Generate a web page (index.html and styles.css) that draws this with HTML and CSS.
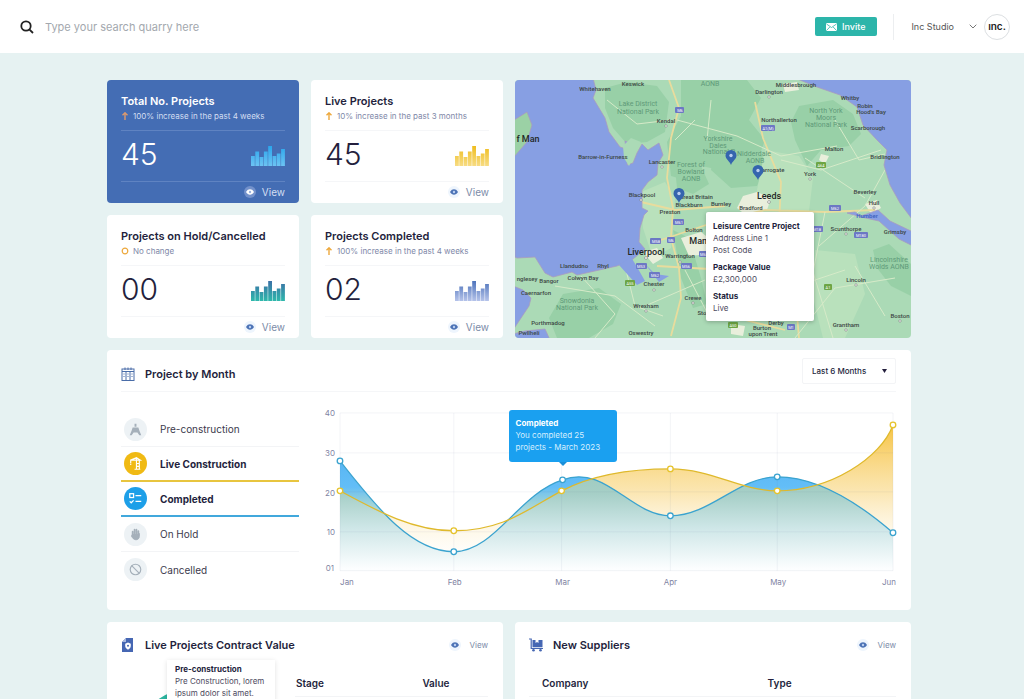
FILE: index.html
```
<!DOCTYPE html>
<html lang="en">
<head>
  <meta charset="UTF-8">
  <meta name="viewport" content="width=device-width, initial-scale=1">
  <title>Projects Dashboard</title>
  <link rel="stylesheet" href="styles.css">
</head>
<body>
  <!-- shared icons -->
  <svg class="sprite" aria-hidden="true">
    <defs>
      <linearGradient id="g-blue" x1="0" y1="0" x2="0" y2="1"><stop offset="0" stop-color="#2ba6ec"/><stop offset="1" stop-color="#6cc3f3"/></linearGradient>
      <linearGradient id="g-yellow" x1="0" y1="0" x2="0" y2="1"><stop offset="0" stop-color="#efbd1e"/><stop offset="1" stop-color="#f7dc84"/></linearGradient>
      <linearGradient id="g-teal" x1="0" y1="0" x2="0" y2="1"><stop offset="0" stop-color="#3b70a6"/><stop offset="1" stop-color="#2fb8ac"/></linearGradient>
      <linearGradient id="g-indigo" x1="0" y1="0" x2="0" y2="1"><stop offset="0" stop-color="#4f74bb"/><stop offset="1" stop-color="#b5c3ea"/></linearGradient>
      <symbol id="bars" viewBox="0 0 34 20">
        <path d="M0 10h3.800v10H0zM4.300 5.500h3.800V20H4.300zM8.600 11h3.800v9H8.600zM12.900 5.500h3.800V20h-3.800zM17.200 0h3.800v20h-3.800zM21.500 10h3.800v10h-3.800zM25.800 7.500h3.800V20h-3.800zM30.100 3h3.800v17h-3.800z"/>
      </symbol>
      <symbol id="eye" viewBox="0 0 12 12">
        <circle class="eye-bg" cx="6" cy="6" r="6"/>
        <path class="eye-shape" d="M2 6c1.200-2 2.500-2.700 4-2.700S8.800 4 10 6c-1.200 2-2.500 2.700-4 2.700S3.200 8 2 6z"/>
        <circle class="eye-dot" cx="6" cy="6" r="1.200"/>
      </symbol>
      <symbol id="arrow-up" viewBox="0 0 8 8">
        <path d="M4 8V1M1.500 3.300L4 .8l2.500 2.500" fill="none" stroke="currentColor" stroke-width="1.400"/>
      </symbol>
      <symbol id="pin" viewBox="0 0 12 15">
        <path d="M6 0a5.500 5.500 0 0 1 5.500 5.500C11.500 9 7.500 11 6 15 4.500 11 .5 9 .5 5.500A5.500 5.500 0 0 1 6 0z" fill="#3565ae"/>
        <circle cx="6" cy="5.500" r="1.700" fill="#b9cdf0"/>
      </symbol>
    </defs>
  </svg>

  <header class="topbar">
    <form class="search" role="search">
      <label for="search" aria-label="Search">
        <svg width="14" height="14" viewBox="0 0 14 14" fill="none" stroke="#222" stroke-width="1.800"><circle cx="6" cy="6" r="4.700"/><path d="M9.300 9.300L13 13"/></svg>
      </label>
      <input type="search" id="search" placeholder="Type your search quarry here">
    </form>
    <button type="button" class="invite-btn">
      <svg width="11" height="8" viewBox="0 0 11 8"><rect width="11" height="8" rx="1" fill="#fff"/><path d="M.5 1l5 3.500 5-3.500M.5 7.500L3.800 4M10.500 7.500L7.200 4" fill="none" stroke="#2cb5aa" stroke-width=".8"/></svg>
      Invite
    </button>
    <button type="button" class="user-btn">
      Inc Studio
      <svg width="8" height="5" viewBox="0 0 8 5" fill="none" stroke="#777"><path d="M.7.700L4 4 7.300.700"/></svg>
      <span class="avatar">ınc.</span>
    </button>
  </header>

  <main class="dashboard">
    <article class="card stat stat-active">
      <h2>Total No. Projects</h2>
      <p class="trend"><svg><use href="#arrow-up"/></svg>100% increase in the past 4 weeks</p>
      <div class="figure"><strong>45</strong><svg fill="url(#g-blue)"><use href="#bars"/></svg></div>
      <a href="#" class="view"><svg><use href="#eye"/></svg>View</a>
    </article>

    <article class="card stat">
      <h2>Live Projects</h2>
      <p class="trend"><svg><use href="#arrow-up"/></svg>10% increase in the past 3 months</p>
      <div class="figure"><strong>45</strong><svg fill="url(#g-yellow)"><use href="#bars"/></svg></div>
      <a href="#" class="view"><svg><use href="#eye"/></svg>View</a>
    </article>

    <section class="map">
      <svg viewBox="0 0 396 258" preserveAspectRatio="xMidYMid slice">
        <rect width="396" height="258" fill="#abdab6"/>
        <!-- parks and uplands -->
        <g fill="#98d0a7">
          <path d="M90 8l22-6 30 4 12 16-4 30-18 10-20 2-14-16-8-20z"/>
          <path d="M166 0h66l14 18-12 22 16 20-8 22-26 10-30-6-16 14-14-4-4-34 14-26z"/>
          <path d="M200 62l40 2 12 20-10 22-26 2-20-18z"/>
          <path d="M284 26l34-6 20 14 8 20-12 12-28 4-14 16-12-26-4-18z"/>
          <path d="M48 214l36-6 22 16-8 20-24 14H42l-8-20z"/>
          <path d="M160 88l26-2 8 18-16 10-16-6z"/>
          <path d="M358 170l16-6 22 20v32l-20-10-14-18z"/>
          <path d="M158 150l16 8 12 40 6 26-14 4-12-30z"/>
        </g>
        <g fill="#b9e1bc">
          <path d="M250 70l34 6 14 22-6 50-30 34-10-40-12-22z"/>
          <path d="M126 112l24-10 10 16-4 50-18 10-10-30z"/>
          <path d="M300 170l40 4 10 40-20 44h-22l-10-40z"/>
        </g>
        <!-- built-up areas -->
        <g fill="#e9efdc">
          <path d="M228 116l14-4 14 6-4 12-20 6-10-8z"/>
          <path d="M128 172l14-4 6 10-10 6zM166 158l20-6 10 8-2 14-20 2zM350 124l12-4 4 8-10 6zM306 74l8 2-4 8-6-4zM216 244l14 2-2 10-12-2zM268 4l14-2 2 8-14 2z"/>
        </g>
        <!-- roads -->
        <g fill="none" stroke="#e8dc9d" stroke-width="1.800">
          <path d="M154 0l10 28-8 30-4 40 6 30-2 30 8 30 2 30-10 38"/>
          <path d="M240 22l8 36 18 44-2 44 14 40 6 72M146 160l54-18 50-12 60 2 50-2"/>
          <path d="M126 122l34 8 50-4M142 186l70 4 80 4M200 220l30 20 40 10"/>
        </g>
        <g fill="none" stroke="#d6eac8" stroke-width="1">
          <path d="M92 20l30 24 34-4M162 40l60 16 44 20 56-10M266 80l40 10 60-20M290 78l60 40M310 132l-12 60 20 66M340 186l30 50M40 206l60 10 40 30M66 196l34 38-20 24M110 186l10 40 28 10M330 190l-60 20M280 258l40-50 60-10M170 190l26 50"/>
          <path d="M160 60l20-20M196 20l-4 40M320 40l24 40 26-6M130 226l60-26M370 90l-20 36-46 40"/>
        </g>
        <!-- sea -->
        <g fill="#879fe3" stroke="#a99abf" stroke-width=".8">
          <path d="M-2-2H78l3 12-3 8 12 20 4 14 11 15 6 2-1-8 4 2v8l-2 14 6-2 4-10 5-9 6 6 11-7 4 12-5 8-1 12-9 7-6 8v18l6 3-4 4-4 13-1 14 6 7-12 10-16 7-40 9-5-3-19 5-8-4-5-8-5-8-18 1-2-1z"/>
          <path d="M-2 206l10 4 8 8-2 8-16 24zM-2 254l12-3 20-2 5 11H-2z"/>
          <path d="M280-2l22 9 23 8 17 12 6 18 14 15 10 10-3 15 6 20 10 18 15 20V-2z"/>
          <path d="M332 133l8-1 6 4 17-6 12 11 25 12v14l-16-8-20-18-18-4z"/>
        </g>
        <path d="M-1 40l13-8 5 13-5 17-13 15z" fill="#9bd1a5" stroke="#a99abf" stroke-width=".8"/>
        <path d="M104 185l12-8 6 10 8 14-8 4zM130 184l10 10 14 2-10 6z" fill="#879fe3"/>
        <!-- Barrow peninsula -->
        <path d="M108 66l8-8 10 4-6 12-6 12-5-8z" fill="#abdab6"/>

        <g class="parks">
          <text x="123" y="26">Lake District</text><text x="123" y="34">National Park</text>
          <text x="195" y="6">AONB</text>
          <text x="203" y="61">Yorkshire</text><text x="203" y="68">Dales</text><text x="204" y="74">National P</text>
          <text x="239" y="76">Nidderdale</text><text x="240" y="83">AONB</text>
          <text x="176" y="87">Forest of</text><text x="176" y="94">Bowland</text><text x="176" y="101">AONB</text>
          <text x="311" y="33">North York</text><text x="311" y="40">Moors</text><text x="311" y="47">National Park</text>
          <text x="62" y="223">Snowdonia</text><text x="62" y="230">National Park</text>
          <text x="374" y="182">Lincolnshire</text><text x="374" y="189">Wolds AONB</text>
        </g>
        <g class="places">
          <text x="80" y="11">Whitehaven</text><text x="118" y="6">Keswick</text><text x="151" y="43">Kendal</text>
          <text x="88" y="79">Barrow-in-Furness</text><text x="147" y="84">Lancaster</text>
          <text x="127" y="117">Blackpool</text><text x="181" y="119">Great Britain</text><text x="174" y="127">Blackburn</text>
          <text x="155" y="134">Preston</text><text x="179" y="152">Bolton</text><text x="165" y="178">Warrington</text>
          <text x="59" y="188">Llandudno</text><text x="88" y="188">Rhyl</text><text x="68" y="200">Colwyn Bay</text>
          <text x="12" y="201">nglesey</text><text x="34" y="203">Bangor</text><text x="21" y="215">Caernarfon</text>
          <text x="139" y="206">Chester</text><text x="131" y="228">Wrexham</text><text x="178" y="220">Crewe</text>
          <text x="33" y="245">Porthmadog</text><text x="14" y="255">Pwllheli</text><text x="126" y="255">Oswestry</text>
          <text x="281" y="7">Middlesbrough</text><text x="254" y="14">Darlington</text><text x="264" y="42">Northallerton</text>
          <text x="335" y="20">Whitby</text><text x="350" y="28">Robin</text><text x="356" y="34">Hood's Bay</text>
          <text x="353" y="50">Scarborough</text><text x="319" y="71">Malton</text><text x="370" y="79">Bridlington</text>
          <text x="256" y="92">Harrogate</text><text x="295" y="96">York</text><text x="350" y="114">Beverley</text>
          <text x="359" y="125">Hull</text><text x="206" y="126">Burnley</text><text x="236" y="130">Bradford</text>
          <text x="331" y="151">Scunthorpe</text><text x="380" y="154">Grimsby</text><text x="341" y="202">Lincoln</text>
          <text x="385" y="238">Boston</text><text x="331" y="247">Grantham</text><text x="261" y="245">Derby</text>
          <text x="247" y="250">Burton</text><text x="248" y="256">upon Trent</text><text x="190" y="235">Stoke</text>
          <text x="352" y="138" fill="#3d5fc0">Humber</text>
        </g>
        <g class="cities">
          <text x="13" y="62">f Man</text><text x="131" y="175">Liverpool</text>
          <text x="254" y="119">Leeds</text><text x="188" y="164">Manch</text>
        </g>
        <g fill="#fff" stroke="#777" stroke-width=".6">
          <circle cx="151" cy="46" r="1.200"/><circle cx="147" cy="87" r="1.200"/><circle cx="131" cy="178" r="1.400"/><circle cx="165" cy="182" r="1.200"/>
          <circle cx="139" cy="210" r="1.200"/><circle cx="131" cy="231" r="1.200"/><circle cx="178" cy="223" r="1.200"/><circle cx="254" cy="122" r="1.400"/>
          <circle cx="295" cy="99" r="1.200"/><circle cx="359" cy="128" r="1.200"/><circle cx="254" cy="17" r="1.200"/><circle cx="341" cy="205" r="1.200"/>
          <circle cx="385" cy="241" r="1.200"/><circle cx="331" cy="250" r="1.200"/><circle cx="331" cy="154" r="1.200"/><circle cx="126" cy="120" r="1.200"/>
        </g>
        <g class="roads">
          <rect x="160" y="27" width="9" height="6"/><text x="165" y="32">M6</text>
          <rect x="158" y="139" width="11" height="6"/><text x="164" y="144">M61</text>
          <rect x="135" y="158" width="11" height="6"/><text x="141" y="163">M58</text>
          <rect x="152" y="157" width="8" height="6"/><text x="156" y="162">M6</text>
          <rect x="121" y="183" width="11" height="6"/><text x="126" y="188">M53</text>
          <rect x="134" y="192" width="11" height="6"/><text x="140" y="197">M62</text>
          <rect x="166" y="183" width="11" height="6"/><text x="171" y="188">M56</text>
          <rect x="184" y="171" width="9" height="6"/><text x="189" y="176">M60</text>
          <rect x="246" y="45" width="14" height="6"/><text x="253" y="50">A1(M)</text>
          <rect x="314" y="125" width="12" height="6"/><text x="320" y="130">M62</text>
          <rect x="296" y="146" width="12" height="6"/><text x="302" y="151">M18</text>
          <rect x="339" y="152" width="14" height="6"/><text x="346" y="157">M180</text>
          <rect x="272" y="244" width="8" height="6"/><text x="276" y="249">M1</text>
        </g>
        <g class="roads a-roads">
          <rect x="110" y="200" width="10" height="6"/><text x="115" y="205">A55</text>
          <rect x="301" y="82" width="10" height="6"/><text x="306" y="87">A64</text>
          <rect x="309" y="204" width="8" height="6"/><text x="313" y="209">A1</text>
          <rect x="213" y="242" width="10" height="6"/><text x="218" y="247">A50</text>
        </g>
        <use href="#pin" x="210" y="70" width="12" height="15"/>
        <use href="#pin" x="237" y="85" width="12" height="15"/>
        <use href="#pin" x="158" y="108" width="12" height="15"/>
      </svg>
      <dl class="map-popup">
        <dt>Leisure Centre Project</dt>
        <dd>Address Line 1<br>Post Code</dd>
        <dt>Package Value</dt>
        <dd>£2,300,000</dd>
        <dt>Status</dt>
        <dd>Live</dd>
      </dl>
    </section>

    <article class="card stat">
      <h2>Projects on Hold/Cancelled</h2>
      <p class="trend"><svg viewBox="0 0 8 8"><circle cx="4" cy="4" r="2.800" fill="none" stroke="currentColor" stroke-width="1.200"/></svg>No change</p>
      <div class="figure"><strong>00</strong><svg fill="url(#g-teal)"><use href="#bars"/></svg></div>
      <a href="#" class="view"><svg><use href="#eye"/></svg>View</a>
    </article>

    <article class="card stat">
      <h2>Projects Completed</h2>
      <p class="trend"><svg><use href="#arrow-up"/></svg>100% increase in the past 4 weeks</p>
      <div class="figure"><strong>02</strong><svg fill="url(#g-indigo)"><use href="#bars"/></svg></div>
      <a href="#" class="view"><svg><use href="#eye"/></svg>View</a>
    </article>

    <section class="card panel months">
      <div class="panel-head">
        <svg width="14" height="14" viewBox="0 0 14 14" fill="none" stroke="#4a6da8"><rect x="1" y="2" width="12" height="11.500"/><path d="M1 4.500h12M4 .5v2.500M7 .5v2.500M10 .5v2.500M5 4.500v9M9 4.500v9M2.500 7h1M6.500 7h1M10.500 7h1M2.500 9.500h1M6.500 9.500h1M10.500 9.500h1"/></svg>
        <h2>Project by Month</h2>
        <select aria-label="Period">
          <option>Last 6 Months</option>
        </select>
      </div>

      <div class="months-body">
        <div class="stages">
          <button type="button">
            <span class="stage-icon"><svg viewBox="0 0 24 24"><path d="M11 6h2v3h-2zM9 10h6l1 3H8zM8 13l-2 5h2l2-3h4l2 3h2l-2-5z" fill="#a5b0ba"/></svg></span>
            Pre-construction
          </button>
          <button type="button" class="is-live">
            <span class="stage-icon"><svg viewBox="0 0 24 24" fill="none" stroke="#fff" stroke-width="1.200"><path d="M7 8.500l6-2.500 4 2.500H7v3M13 6v12M16 9v9M13 12h3M13 15h3M11 18h6M7 12v1.500"/></svg></span>
            Live Construction
          </button>
          <button type="button" class="is-completed">
            <span class="stage-icon"><svg viewBox="0 0 24 24" fill="none" stroke="#fff" stroke-width="1.300"><rect x="6" y="7" width="4" height="4"/><path d="M12 9h6M12 15h6M6 15l1.500 1.500L10 14"/></svg></span>
            Completed
          </button>
          <button type="button">
            <span class="stage-icon"><svg viewBox="0 0 24 24" fill="none" stroke="#a5b0ba" stroke-width="1.800" stroke-linecap="round"><path d="M9 13V9M11 12V7M13 12V7M15 12V8.500"/><path d="M9 12h6l1-1v3c0 2-1.500 3.500-3.500 3.500S9 16 8 14z" fill="#a5b0ba" stroke-width="1"/></svg></span>
            On Hold
          </button>
          <button type="button">
            <span class="stage-icon"><svg viewBox="0 0 24 24" fill="none" stroke="#a5b0ba" stroke-width="1.200"><circle cx="12" cy="12" r="5.500"/><path d="M8 8l8 8"/></svg></span>
            Cancelled
          </button>
        </div>

        <div class="chart">
          <svg viewBox="0 0 576 190">
            <defs>
              <linearGradient id="fill-blue" gradientUnits="userSpaceOnUse" x1="0" y1="58" x2="0" y2="164"><stop offset="0" stop-color="#2fa4f0" stop-opacity=".8"/><stop offset=".25" stop-color="#2fa8f5" stop-opacity=".75"/><stop offset=".4" stop-color="#5bb4c0" stop-opacity=".6"/><stop offset="1" stop-color="#bfe9ea" stop-opacity=".05"/></linearGradient>
              <linearGradient id="fill-yellow" gradientUnits="userSpaceOnUse" x1="0" y1="22" x2="0" y2="160"><stop offset="0" stop-color="#f5b921" stop-opacity=".85"/><stop offset=".5" stop-color="#f7cf6a" stop-opacity=".5"/><stop offset="1" stop-color="#fdf0cc" stop-opacity="0"/></linearGradient>
              <linearGradient id="fill-both" gradientUnits="userSpaceOnUse" x1="0" y1="66" x2="0" y2="166"><stop offset="0" stop-color="#9ecabd"/><stop offset=".25" stop-color="#a6cfc7"/><stop offset=".6" stop-color="#cfe7e8"/><stop offset="1" stop-color="#fcfeff"/></linearGradient>
              <clipPath id="under-yellow"><path d="M19 88C56 108 92 128 133 128C182 128 206 107 241 88C272 72 308 66 350 66S420 88 457 88C510 88 561 55 573 22V168H19z"/></clipPath>
            </defs>
            <path fill="url(#fill-yellow)" d="M19 88C56 108 92 128 133 128C182 128 206 107 241 88C272 72 308 66 350 66S420 88 457 88C510 88 561 55 573 22V168H19z"/>
            <path fill="url(#fill-blue)" d="M19 58C58 108 92 149 133 149S198 91 242 77C285 61 310 113 350 113S418 74 457 74C500 74 543 104 573 130V168H19z"/>
            <!-- overlap of the two areas -->
            <path clip-path="url(#under-yellow)" fill="url(#fill-both)" d="M19 58C58 108 92 149 133 149S198 91 242 77C285 61 310 113 350 113S418 74 457 74C500 74 543 104 573 130V168H19z"/>
            <path class="grid-lines" d="M19 10h554M19 50h554M19 89h554M19 129h554M19 168h554M19 10v158M133 10v158M241 10v158M350 10v158M457 10v158M573 10v158"/>
            <g fill="none" stroke-width="1.300">
              <path stroke="#3ba3cf" d="M19 58C58 108 92 149 133 149S198 91 242 77C285 61 310 113 350 113S418 74 457 74C500 74 543 104 573 130"/>
              <path stroke="#dfb92c" d="M19 88C56 108 92 128 133 128C182 128 206 107 241 88C272 72 308 66 350 66S420 88 457 88C510 88 561 55 573 22"/>
            </g>
            <g fill="#fff" stroke="#3ba3cf" stroke-width="1.300">
              <circle cx="19" cy="58" r="2.800"/><circle cx="133" cy="149" r="2.800"/><circle cx="242" cy="77" r="2.800"/><circle cx="350" cy="113" r="2.800"/><circle cx="457" cy="74" r="2.800"/><circle cx="573" cy="130" r="2.800"/>
            </g>
            <g fill="#fff" stroke="#e6c32c" stroke-width="1.300">
              <circle cx="19" cy="88" r="2.800"/><circle cx="133" cy="128" r="2.800"/><circle cx="241" cy="88" r="2.800"/><circle cx="350" cy="66" r="2.800"/><circle cx="457" cy="88" r="2.800"/><circle cx="573" cy="22" r="2.800"/>
            </g>
            <g class="axis-y"><text x="14" y="13">40</text><text x="14" y="53">30</text><text x="14" y="93">20</text><text x="14" y="132">10</text><text x="13" y="168">01</text></g>
            <g class="axis-x"><text x="26" y="182">Jan</text><text x="134" y="182">Feb</text><text x="242" y="182">Mar</text><text x="350" y="182">Apr</text><text x="458" y="182">May</text><text x="569" y="182">Jun</text></g>
          </svg>
          <div class="chart-tip" role="tooltip">
            <strong>Completed</strong>
            You completed 25 projects - March 2023
          </div>
        </div>
      </div>
    </section>

    <section class="card panel half">
      <div class="panel-head">
        <svg width="14" height="14" viewBox="0 0 14 14"><path d="M5 0h7v14H1V4z" fill="#4667b3"/><path d="M5 0v4H1z" fill="#a9b9df"/><path d="M7 4.500l2.800 1.200v2.300c0 1.800-1.500 3-2.800 3.800-1.300-.8-2.800-2-2.800-3.800V5.700z" fill="#fff"/><circle cx="7" cy="7.800" r="1" fill="#4667b3"/></svg>
        <h2>Live Projects Contract Value</h2>
        <a href="#" class="view"><svg><use href="#eye"/></svg>View</a>
      </div>
      <div class="contract">
        <div class="donut">
          <svg viewBox="0 0 168 168"><circle cx="84" cy="84" r="68" fill="none" stroke="#2cb5a0" stroke-width="32"/></svg>
          <div class="donut-tip">
            <strong>Pre-construction</strong>
            Pre Construction, lorem ipsum dolor sit amet.
          </div>
        </div>
        <table>
          <thead><tr><th>Stage</th><th>Value</th></tr></thead>
        </table>
      </div>
    </section>

    <section class="card panel half">
      <div class="panel-head">
        <svg width="14" height="14" viewBox="0 0 14 14"><path d="M0 1h2.200v9.500H14" fill="none" stroke="#4667b3" stroke-width="1.200"/><path d="M3.500 2h3v3l1.500-1 1.500 1V2H13.500v7.200h-10z" fill="#4667b3"/><circle cx="4.500" cy="12.200" r="1.300" fill="#4667b3"/><circle cx="11.500" cy="12.200" r="1.300" fill="#4667b3"/></svg>
        <h2>New Suppliers</h2>
        <a href="#" class="view"><svg><use href="#eye"/></svg>View</a>
      </div>
      <table class="suppliers">
        <thead><tr><th>Company</th><th>Type</th></tr></thead>
      </table>
    </section>
  </main>
</body>
</html>
```
FILE: styles.css
```
* {
  box-sizing: border-box;
}

body {
  margin: 0;
  background: #e6f2f2;
  font-family: Inter, "Open Sans", sans-serif;
  color: #241f3d;
}

h2, p, dl, dd {
  margin: 0;
}

button, input, select {
  font-family: inherit;
}

a {
  text-decoration: none;
}

.sprite {
  display: block;
  width: 0;
  height: 0;
}

/* top bar */
.topbar {
  display: flex;
  align-items: center;
  height: 53px;
  padding: 0 14px 0 20px;
  background: #fff;
}

.search {
  display: flex;
  align-items: center;
  flex: 1;
  gap: 11px;
}

.search label {
  display: flex;
}

.search input {
  flex: 1;
  padding: 0;
  border: 0;
  outline: 0;
  background: none;
  font-size: 11px;
}

.search input::placeholder {
  color: #a3a8ae;
}

.invite-btn {
  display: flex;
  align-items: center;
  gap: 5px;
  height: 19px;
  padding: 0 12px 0 11px;
  border: 0;
  border-radius: 2px;
  background: #2cb5aa;
  color: #fff;
  font-size: 9px;
  font-weight: 500;
}

.user-btn {
  display: flex;
  align-items: center;
  gap: 7px;
  height: 26px;
  margin-left: 16px;
  padding: 0 0 0 17px;
  border: 0;
  border-left: 1px solid #eceef0;
  background: none;
  color: #555;
  font-size: 9px;
}

.user-btn svg {
  margin-left: 8px;
}

.avatar {
  width: 26px;
  height: 26px;
  border: 1px solid #dcdfe2;
  border-radius: 50%;
  color: #222;
  font-size: 10px;
  font-weight: 600;
  line-height: 23px;
  text-align: center;
}

/* layout */
.dashboard {
  display: grid;
  grid-template-columns: repeat(4, 1fr);
  gap: 12px;
  padding: 27px 113px 0 107px;
}

.card {
  border-radius: 4px;
  background: #fff;
}

.card h2 {
  font-size: 11px;
  font-weight: 600;
  line-height: 16px;
  white-space: nowrap;
}

/* stat cards */
.stat {
  padding: 13px 14px 1px;
}

.trend {
  display: flex;
  align-items: center;
  gap: 4px;
  padding-bottom: 7px;
  color: #8088a8;
  font-size: 8px;
  line-height: 14px;
  white-space: nowrap;
}

.trend svg {
  width: 8px;
  height: 8px;
  color: #eda83c;
}

.figure {
  display: flex;
  align-items: center;
  justify-content: space-between;
  height: 52px;
  border-top: 1px solid #f5f6f8;
  border-bottom: 1px solid #f5f6f8;
}

.figure strong {
  padding-bottom: 4px;
  font-size: 30px;
  font-weight: 300;
}

.figure svg {
  width: 34px;
  height: 20px;
}

.view {
  display: flex;
  align-items: center;
  justify-content: flex-end;
  gap: 6px;
  color: #7c8ca8;
  font-size: 10px;
  line-height: 20px;
}

.view svg {
  width: 12px;
  height: 12px;
}

.eye-bg {
  fill: var(--eye-bg, #eef5fd);
}

.eye-shape {
  fill: var(--eye, #4b72b5);
}

.eye-dot {
  fill: var(--eye-dot, #b9cdf0);
}

.stat-active {
  --eye-bg: #7391cb;
  --eye: #fff;
  --eye-dot: #9db4df;
  background: #446db4;
  color: #fff;
}

.stat-active .trend,
.stat-active .view {
  color: #d3def2;
}

.stat-active .trend svg {
  color: #dd9a6d;
}

.stat-active .figure {
  border-color: #5f83c2;
}

/* map */
.map {
  position: relative;
  grid-column: span 2;
  grid-row: span 2;
  border-radius: 4px;
  overflow: hidden;
}

.map > svg {
  display: block;
  width: 100%;
  height: 100%;
  font-family: Roboto, sans-serif;
  text-anchor: middle;
}

.places {
  fill: #3b4643;
  font-size: 6px;
  font-weight: 500;
}

.parks {
  fill: #5f9a79;
  font-size: 7px;
}

.cities {
  fill: #1f2826;
  font-size: 9px;
  font-weight: 500;
}

.roads rect {
  fill: #6c78c4;
  rx: 1px;
}

.roads text {
  fill: #fff;
  font-size: 4px;
}

.a-roads rect {
  fill: #6da544;
}

.map-popup {
  position: absolute;
  top: 132px;
  left: 191px;
  width: 108px;
  padding: 8px 7px 7px;
  border-radius: 2px;
  background: #fff;
  box-shadow: 0 1px 4px rgba(0, 0, 0, 0.25);
  font-size: 8px;
  line-height: 12px;
  white-space: nowrap;
}

.map-popup dt {
  font-weight: 700;
}

.map-popup dd {
  color: #4d4a5e;
}

.map-popup dd + dt {
  margin-top: 5px;
}

/* panels */
.panel {
  padding: 8px 15px 0 14px;
}

.panel-head {
  display: flex;
  align-items: center;
  gap: 10px;
}

.panel-head h2 {
  flex: 1;
}

.panel-head .view {
  gap: 8px;
  font-size: 8px;
}

.months {
  grid-column: 1 / -1;
}

.months .panel-head {
  height: 34px;
  padding-bottom: 2px;
  border-bottom: 1px solid #f5f6f8;
}

.panel-head select {
  align-self: flex-start;
  width: 94px;
  height: 26px;
  padding: 0 9px;
  border: 1px solid #f3f4f6;
  border-radius: 2px;
  appearance: none;
  background: #fff url("data:image/svg+xml,%3Csvg xmlns='http://www.w3.org/2000/svg' viewBox='0 0 5 4'%3E%3Cpath d='M0 0h5L2.500 4z' fill='%23241f3d'/%3E%3C/svg%3E") no-repeat right 8px center / 5px 4px;
  color: #241f3d;
  font-size: 8px;
  font-weight: 500;
}

.months-body {
  display: grid;
  grid-template-columns: 178px 1fr;
  gap: 22px;
  padding: 11px 0 17px;
}

.stages {
  padding-top: 9px;
}

.stages button {
  display: flex;
  align-items: center;
  gap: 13px;
  width: 100%;
  height: 35px;
  padding: 0 3px;
  border: 0;
  border-bottom: 1px solid #f3f4f6;
  background: none;
  color: #3c3a4d;
  font-size: 10px;
}

.stages button:last-child {
  border-bottom: 0;
}

.stage-icon {
  width: 23px;
  height: 23px;
  border-radius: 50%;
  background: #edf2f5;
}

.stage-icon svg {
  display: block;
}

.stages .is-live,
.stages .is-completed {
  color: #241f3d;
  font-weight: 700;
}

.stages .is-live {
  border-bottom: 2px solid #e8c53f;
}

.is-live .stage-icon {
  background: #f0ba14;
}

.stages .is-completed {
  border-bottom: 2px solid #41a8dc;
}

.is-completed .stage-icon {
  background: #1d9fe8;
}

/* chart */
.chart {
  position: relative;
}

.chart > svg {
  display: block;
  width: 100%;
  overflow: visible;
}

.grid-lines {
  fill: none;
  stroke: #5a6a90;
  stroke-opacity: 0.08;
}

.axis-y,
.axis-x {
  fill: #7f84a3;
  font-size: 8px;
}

.axis-y {
  text-anchor: end;
}

.axis-x {
  text-anchor: middle;
}

.chart-tip {
  position: absolute;
  top: 7px;
  left: 42%;
  width: 108px;
  margin-left: -54px;
  padding: 7px 7px 9px;
  border-radius: 3px;
  background: #1aa0f0;
  color: #d5eefe;
  font-size: 8px;
  line-height: 12px;
}

.chart-tip strong {
  display: block;
  color: #fff;
}

.chart-tip::after {
  content: "";
  position: absolute;
  top: 100%;
  left: 50%;
  margin-left: -4px;
  border: 4px solid transparent;
  border-top-color: #1a8fd8;
}

/* bottom panels */
.half {
  grid-column: span 2;
}

.half .panel-head {
  height: 30px;
}

.contract {
  display: grid;
  grid-template-columns: 168px 1fr;
  gap: 6px;
}

.donut {
  position: relative;
  padding-top: 25px;
}

.donut > svg {
  display: block;
  width: 100%;
}

.donut-tip {
  position: absolute;
  top: 0;
  left: 46px;
  width: 108px;
  padding: 3px 8px 8px;
  background: #fff;
  box-shadow: 0 1px 5px rgba(0, 0, 0, 0.12);
  color: #4d4a5e;
  font-size: 8px;
  line-height: 12px;
}

.donut-tip strong {
  display: block;
  color: #241f3d;
}

.half table {
  width: 100%;
  margin-top: 11px;
  align-self: start;
  border-collapse: collapse;
  table-layout: fixed;
}

.half th {
  height: 26px;
  padding: 0;
  border-bottom: 1px solid #f3f4f6;
  font-size: 10px;
  font-weight: 600;
  text-align: left;
}

.contract th:first-child {
  width: 66%;
  padding-left: 1px;
}

.suppliers th:first-child {
  width: 65%;
  padding-left: 13px;
}
```
